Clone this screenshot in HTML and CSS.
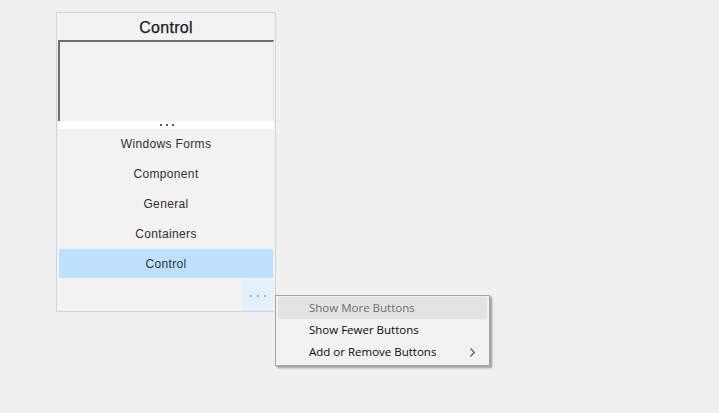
FILE: index.html
```html
<!DOCTYPE html>
<html>
<head>
<meta charset="utf-8">
<link rel="stylesheet" href="styles.css">
</head>
<body>
<div class="panel">
  <div class="title">Control</div>
  <div class="box"></div>
  <div class="grip"><svg width="16" height="3" viewBox="0 0 16 3"><rect x="0" y="0" width="2" height="2" fill="#5a5a5a"/><rect x="6" y="0" width="2" height="2" fill="#5a5a5a"/><rect x="12" y="0" width="2" height="2" fill="#5a5a5a"/></svg></div>
  <div class="list">
    <div class="item">Windows Forms</div>
    <div class="item">Component</div>
    <div class="item">General</div>
    <div class="item">Containers</div>
    <div class="item selected">Control</div>
  </div>
  <div class="footer">
    <div class="more"><svg width="16" height="3" viewBox="0 0 16 3"><rect x="0" y="0" width="2" height="2" fill="#9aa6b2"/><rect x="7" y="0" width="2" height="2" fill="#9aa6b2"/><rect x="14" y="0" width="2" height="2" fill="#9aa6b2"/></svg></div>
  </div>
</div>
<div class="menu">
  <div class="mitem disabled hot">Show More Buttons</div>
  <div class="mitem">Show Fewer Buttons</div>
  <div class="mitem">Add or Remove Buttons<svg class="arrow" width="5" height="9" viewBox="0 0 5 9"><polyline points="0.5,0.5 4.2,4.5 0.5,8.5" fill="none" stroke="#333" stroke-width="1.1"/></svg></div>
</div>
</body>
</html>
```
FILE: styles.css
```css
html, body {
  margin: 0;
  background: #f0f0f0;
  height: 100%;
}
body {
  padding: 12px 0 0 56px;
  box-sizing: border-box;
  font-family: "Liberation Sans", Arial, sans-serif;
  position: relative;
}
.panel {
  width: 220px;
  height: 300px;
  box-sizing: border-box;
  border: 1px solid #d3d3d3;
  background: #f2f2f2;
  padding: 0 1px;
  display: flex;
  flex-direction: column;
}
.title {
  height: 27px;
  line-height: 29px;
  text-align: center;
  font-size: 16px;
  color: #1a1a1a;
  letter-spacing: 0.3px;
  -webkit-text-stroke: 0.25px #1a1a1a;
}
.box {
  height: 81px;
  box-sizing: border-box;
  border-top: 2px solid #6e6e6e;
  border-left: 2px solid #6e6e6e;
  border-right: 1px solid #e3e3e3;
  background: #f2f2f2;
}
.grip {
  height: 8px;
  background: #ffffff;
  display: flex;
  justify-content: center;
  align-items: center;
  padding-left: 4px;
}
.grip svg {
  display: block;
}
.list {
  display: flex;
  flex-direction: column;
}
.item {
  height: 30px;
  line-height: 31px;
  text-align: center;
  font-size: 12px;
  color: #303030;
  letter-spacing: 0.35px;
}
.item.selected {
  background: #bde0fc;
  margin: 0 1px 1px;
  height: 29px;
  line-height: 30px;
}
.footer {
  flex: 1;
  display: flex;
  justify-content: flex-end;
  align-items: stretch;
  padding: 1px 1px 0 0;
}
.more {
  width: 30px;
  background: #e3f1fc;
  display: flex;
  justify-content: center;
  align-items: center;
  padding-top: 1px;
}
.more svg {
  display: block;
}
.menu {
  position: absolute;
  left: 275px;
  top: 295px;
  width: 215px;
  height: 71px;
  box-sizing: border-box;
  border: 1px solid #a5a5a5;
  background: #f2f2f2;
  padding: 1px 2px;
  box-shadow: 2px 2px 2px rgba(0, 0, 0, 0.35);
  font-family: "Open Sans", "Noto Sans", sans-serif;
  font-size: 11.5px;
}
.mitem {
  height: 22px;
  line-height: 22px;
  padding-left: 31px;
  color: #0a0a0a;
  position: relative;
}
.mitem.hot {
  background: #e3e3e3;
}
.mitem.disabled {
  color: #6d6d6d;
}
.arrow {
  position: absolute;
  right: 12px;
  top: 7px;
}
```
